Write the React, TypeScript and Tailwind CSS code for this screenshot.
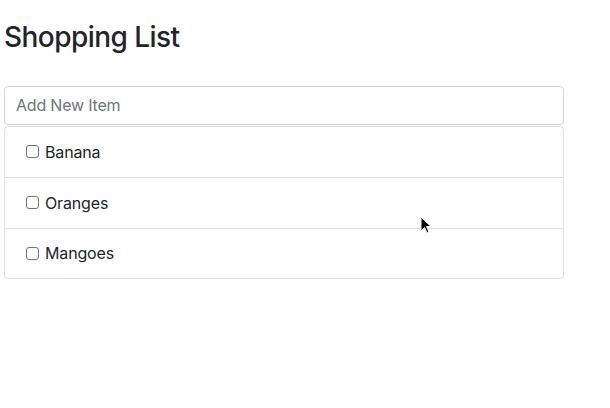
import React from "react";

const items = ["Banana", "Oranges", "Mangoes"];

export default function App() {
  return (
    <div
      className="relative w-[610px] h-[408px] bg-white text-[#212529]"
      style={{ fontFamily: 'Inter, "Liberation Sans", sans-serif' }}
    >
      <div className="w-[560px] ml-[4px] pt-[21px]">
        <h3 className="text-[28px] leading-[33.6px] font-medium mb-[31px] tracking-[-0.55px]">
          Shopping List
        </h3>
        <input
          type="text"
          placeholder="Add New Item"
          className="block w-full h-[39px] px-[11px] text-[16px] tracking-[-0.2px] border border-[#ced4da] rounded-[4px] placeholder:text-[#6c757d] outline-none"
        />
        <ul className="mt-px border border-[rgba(0,0,0,0.125)] rounded-[4px]">
          {items.map((it, i) => (
            <li
              key={it}
              className={
                "flex items-center h-[50.5px] pl-[21px] text-[16px] tracking-[-0.15px] " +
                (i > 0 ? "border-t border-[rgba(0,0,0,0.125)]" : "")
              }
            >
              <span className="w-[13px] h-[13px] border border-[#767676] rounded-[3px] mr-[6px] bg-white" />
              <span>{it}</span>
            </li>
          ))}
        </ul>
      </div>
      <svg
        className="absolute left-[420px] top-[216px]"
        width="12"
        height="19"
        viewBox="0 0 12 19"
      >
        <path
          d="M1 1 L1 15 L4.5 11.5 L7 17 L9 16 L6.5 10.5 L11 10.5 Z"
          fill="#000"
          stroke="#fff"
          strokeWidth="1"
        />
      </svg>
    </div>
  );
}
